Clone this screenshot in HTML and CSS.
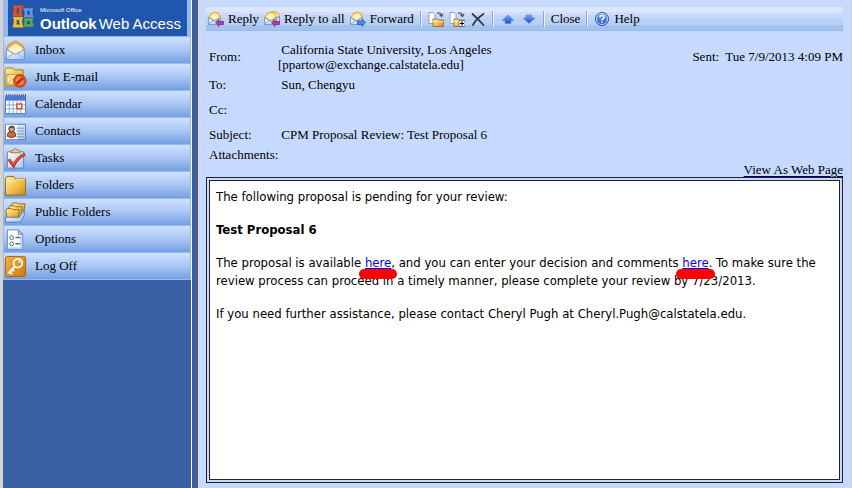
FILE: index.html
```html
<!DOCTYPE html>
<html lang="en">
<head>
<meta charset="utf-8">
<title>Outlook Web Access</title>
<link rel="stylesheet" href="styles.css">
</head>
<body>
<svg class="defs" aria-hidden="true">
  <defs>
    <linearGradient id="gold" x1="0" y1="0" x2="1" y2="1"><stop offset="0" stop-color="#fff0a8"/><stop offset=".5" stop-color="#f3c44e"/><stop offset="1" stop-color="#c88a1c"/></linearGradient>
    <linearGradient id="paper" x1="0" y1="0" x2="1" y2="1"><stop offset="0" stop-color="#fff"/><stop offset="1" stop-color="#a4c6f2"/></linearGradient>
    <linearGradient id="blue" x1="0" y1="0" x2="0" y2="1"><stop offset="0" stop-color="#6fa8ff"/><stop offset="1" stop-color="#1c50cc"/></linearGradient>
    <linearGradient id="orange" x1="0" y1="0" x2="1" y2="1"><stop offset="0" stop-color="#f7b23c"/><stop offset="1" stop-color="#cf7a08"/></linearGradient>
    <g id="mail">
      <path d="M1 6.500 3 2.500 7 1 11 2.500 12.500 6.500 6.500 9.500Z" fill="#ffdc5c" stroke="#d0a040" stroke-width=".8"/>
      <path d="M3 5 7 2.500 10 4V7L6.500 9 3 7Z" fill="#fff6c4"/>
      <path d="M.5 6.500 6.500 10 12.500 6.500V13.500H.5Z" fill="url(#paper)" stroke="#6b8cc0" stroke-width=".8"/>
      <path d="M.8 13.200 5 9.500M12.200 13.200 8 9.500" stroke="#7f9fd0" stroke-width=".8"/>
    </g>
    <g id="move">
      <path d="M1 1.500H5L7 3.500V12.500H1Z" fill="#fff" stroke="#8791a8" stroke-width=".8"/>
      <path d="M9 2.500Q12 .5 13.500 4.500M11.500 3.500 13.700 5.500 15 2.800" fill="none" stroke="#44597f" stroke-width="1.200"/>
      <path d="M5 8H9L10 9H15.500V15.500H5Z" fill="url(#gold)" stroke="#96651a" stroke-width=".8"/>
      <path d="M5 10.500H15.500" stroke="#fff0a0" stroke-width=".8"/>
    </g>
  </defs>
</svg>
<div class="app">
  <aside class="sidebar">
    <header class="logo">
      <svg class="logo-mark" viewBox="0 0 22 24" aria-hidden="true">
        <g fill="none" stroke-width="3">
          <path d="M9.500 3H3Q4 7 2.500 11H8.500Q7.500 7 9.500 3Z" stroke="#e2501e"/>
          <path d="M13 5.500H19.500Q18.500 9 20 12H13.500Q14.500 9 13 5.500Z" stroke="#6b94df" stroke-width="2.500"/>
          <path d="M3 14.500H9Q8 18 9.500 22H2.500Q4 18 3 14.500Z" stroke="#f3bd24"/>
          <path d="M13.500 15.500H19.500Q18.500 18 20 21.500H13Q14.500 18 13.500 15.500Z" stroke="#62ae3c" stroke-width="2.500"/>
        </g>
      </svg>
      <div class="logo-text">
        <span class="logo-brand">Microsoft Office</span>
        <span class="logo-name"><b>Outlook</b><span>Web Access</span></span>
      </div>
    </header>
    <nav class="nav">
      <a href="#inbox"><svg viewBox="0 0 24 24"><path d="M2.500 11 5 6 12 2 19 6 21.500 11 12 16Z" fill="#f7b348" stroke="#d28a2a"/><path d="M5 9.500 12 5 19 9.500V13L12 16 5 13Z" fill="#fff3c8"/><path d="M2.500 11 12 16 21.500 11V21.500H2.500Z" fill="url(#paper)" stroke="#6f93c6"/><path d="M3 21 9.500 15M21 21 14.500 15" stroke="#85a5d4"/></svg>Inbox</a>
      <a href="#junk"><svg viewBox="0 0 24 24"><path d="M1 4 2 2H9L11 4H20V19L18 21H1Z" fill="url(#gold)" stroke="#a87824"/><path d="M3 9H16V19H3Z" fill="#ffeeb4" stroke="#c7963a"/><path d="M3 9 9.500 15 16 9M3 19 8 14" fill="none" stroke="#d3a34b"/><circle cx="16.500" cy="15.500" r="6.500" fill="#e65a28" stroke="#a93210"/><circle cx="16.500" cy="15.500" r="4" fill="#f08c58"/><path d="M13 18.500 20 12.500" stroke="#c32d0c" stroke-width="3"/></svg>Junk E-mail</a>
      <a href="#calendar"><svg viewBox="0 0 24 24"><path d="M1.500 4H22.500V21.500H1.500Z" fill="#fff" stroke="#5577b5"/><path d="M1 3.500H23V8H1Z" fill="#4679d8"/><path d="M2 2.500H23" stroke="#202840" stroke-width="2" stroke-dasharray="1 1"/><path d="M2 12.500H22M2 16.500H22M5.500 8V21M9.500 8V21M13.500 8V21M17.500 8V21" stroke="#84a6de"/><path d="M13.500 11.500H18.500V16.500H13.500Z" fill="#fff" stroke="#e04c24" stroke-width="1.500"/></svg>Calendar</a>
      <a href="#contacts"><svg viewBox="0 0 24 24"><path d="M1.500 4.500H22.500V20.500H1.500Z" fill="url(#paper)" stroke="#587bae"/><path d="M2 5H14V20H2Z" fill="#fff"/><path d="M3.500 17Q3 12 8 12T12 17Q8 20 3.500 17Z" fill="#dd6825" stroke="#6c351b"/><circle cx="8" cy="9.500" r="3" fill="#c8a891" stroke="#36353b"/><path d="M5 9Q5 6 8 6T11 9Q8 7 5 9Z" fill="#4b4b55"/><path d="M13 8.500H21M13 11.500H21M13 14.500H21M13 17.500H21" stroke="#7193ca"/></svg>Contacts</a>
      <a href="#tasks"><svg viewBox="0 0 24 24"><path d="M3.500 5H20.500V22H3.500Z" fill="url(#paper)" stroke="#6482b0"/><path d="M7 6Q7 3 10 3Q12 0 14 3Q17 3 17 6Z" fill="#e5ce82" stroke="#957b38"/><path d="M5 13 10 19.500Q14 11 22 7.500" fill="none" stroke="#a91f16" stroke-width="3"/><path d="M5 13 10 18.500Q14 11 22 7.500" fill="none" stroke="#ee4630" stroke-width="2"/></svg>Tasks</a>
      <a href="#folders"><svg viewBox="0 0 24 24"><path d="M1.500 5 3 2.500H10L12 5H22.500V22H1.500Z" fill="url(#gold)" stroke="#94671e"/><path d="M2 7.500H11L13 5.500H22" fill="none" stroke="#fff0a8"/></svg>Folders</a>
      <a href="#public"><svg viewBox="0 0 24 24"><path d="M8 4 9 2H14L15 3H22L20 15H8Z" fill="url(#gold)" stroke="#946a20"/><path d="M5 7 6 5H11L12 6H19L18 17H5Z" fill="url(#gold)" stroke="#946a20"/><path d="M2 10 3 8H8L9 9H16L15 18H3Z" fill="url(#gold)" stroke="#946a20"/><path d="M1.500 17H16L21 9V15L17 22H1.500Z" fill="url(#paper)" stroke="#607eae"/></svg>Public Folders</a>
      <a href="#options"><svg viewBox="0 0 24 24"><path d="M3.500 2H15L19.500 6.500V22H3.500Z" fill="#fff" stroke="#6686bd"/><path d="M18 8V21H5" fill="none" stroke="#bed3ee" stroke-width="2"/><path d="M15 2V6.500H19.500Z" fill="#bcd0ec" stroke="#6686bd"/><circle cx="8" cy="10" r="2" fill="none" stroke="#4f617f"/><circle cx="8" cy="16.500" r="2" fill="none" stroke="#4f617f"/><path d="M12 10H17M12 16.500H17" stroke="#536b95" stroke-width="1.500"/></svg>Options</a>
      <a href="#logoff"><svg viewBox="0 0 24 24"><rect x="1.500" y="1.500" width="21" height="21" rx="2" fill="url(#orange)" stroke="#a7640a"/><circle cx="14.500" cy="8.500" r="4.500" fill="none" stroke="#fff" stroke-width="2"/><circle cx="16" cy="7" r="1" fill="#fff"/><path d="M11.500 12 4.500 19M6 17.500 8.500 20M8.500 15 10.500 17" stroke="#fff" stroke-width="2"/></svg>Log Off</a>
    </nav>
  </aside>
  <div class="divider"></div>
  <main class="message">
    <div class="toolbar" role="toolbar" aria-label="Message actions">
      <button type="button"><svg viewBox="0 0 16 16"><use href="#mail"/><path d="M7.500 11.500 11 8.500V10.500H15.500V13.500H11V15.500Z" fill="#b13ca8" stroke="#78216f" stroke-width=".7"/></svg>Reply</button>
      <button type="button"><svg viewBox="0 0 16 16"><g transform="translate(3 -1)"><use href="#mail"/></g><use href="#mail"/><path d="M7.500 11.500 11 8.500V10.500H15.500V13.500H11V15.500Z" fill="#b13ca8" stroke="#78216f" stroke-width=".7"/></svg>Reply to all</button>
      <button type="button"><svg viewBox="0 0 16 16"><use href="#mail"/><path d="M15.500 11.500 12 8V10H7.500V13.500H12V15.500Z" fill="#428cf2" stroke="#1f4fa9" stroke-width=".7"/></svg>Forward</button>
      <span class="separator"></span>
      <button type="button" aria-label="Move"><svg viewBox="0 0 16 16"><use href="#move"/></svg></button>
      <button type="button" aria-label="Copy"><svg viewBox="0 0 16 16"><use href="#move"/><rect x="10" y="9.500" width="6" height="6" rx="1" fill="#fff" stroke="#4b4b4b" stroke-width=".7"/><path d="M11 12.500H15M13 10.500V14.500" stroke="#000" stroke-width="1.200"/></svg></button>
      <button type="button" aria-label="Delete"><svg viewBox="0 0 16 16"><path d="M2.500 3Q8 8 13.500 14M13.500 3Q6 8 3 14" fill="none" stroke="#333942" stroke-width="1.800" stroke-linecap="round"/></svg></button>
      <span class="separator"></span>
      <button type="button" aria-label="Previous"><svg viewBox="0 0 16 16"><path d="M8 4 14 9.500H11V12.500H5V9.500H2Z" fill="url(#blue)" stroke="#5c8fe6" stroke-width=".7"/></svg></button>
      <button type="button" aria-label="Next"><svg viewBox="0 0 16 16"><path d="M8 12.500 14 7H11V4H5V7H2Z" fill="url(#blue)" stroke="#5c8fe6" stroke-width=".7"/></svg></button>
      <span class="separator"></span>
      <button type="button">Close</button>
      <span class="separator"></span>
      <button type="button"><svg viewBox="0 0 16 16"><circle cx="8" cy="8" r="6.500" fill="url(#blue)" stroke="#285bb4"/><circle cx="8" cy="8" r="5.500" fill="none" stroke="#c9defc"/><path d="M6 6.500Q6 4.500 8 4.500T10 6.500Q10 7.500 8 8.500V9.500M8 10.500V12" fill="none" stroke="#fff" stroke-width="1.500"/></svg>Help</button>
    </div>
    <div class="headers">
      <dl class="fields">
        <dt>From:</dt><dd class="sender">&nbsp;California State University, Los Angeles<br>[ppartow@exchange.calstatela.edu]</dd>
        <dt>To:</dt><dd>&nbsp;Sun, Chengyu</dd>
        <dt>Cc:</dt><dd></dd>
        <dt>Subject:</dt><dd>&nbsp;CPM Proposal Review: Test Proposal 6</dd>
      </dl>
      <div class="sent">Sent:&nbsp; Tue 7/9/2013 4:09 PM</div>
    </div>
    <div class="attachments">Attachments:</div>
    <a class="web-view" href="#web">View As Web Page</a>
    <div class="frame">
      <article class="mail">
        <p>The following proposal is pending for your review:</p>
        <p><b>Test Proposal 6</b></p>
        <p>The proposal is available <a class="marked" href="#proposal">here</a>, and you can enter your decision and comments <a class="marked" href="#decision">here</a>. To make sure the review process can proceed in a timely manner, please complete your review by 7/23/2013.</p>
        <p>If you need further assistance, please contact Cheryl Pugh at Cheryl.Pugh@calstatela.edu.</p>
      </article>
    </div>
  </main>
</div>
</body>
</html>
```
FILE: styles.css
```css
* { box-sizing: border-box; }

body {
  margin: 0;
  font: 13px/16px "Liberation Serif", "Times New Roman", serif;
  color: #000;
  background: #c6daff;
}

.defs { position: absolute; width: 0; height: 0; }

.app { display: flex; min-height: 100vh; }

.sidebar {
  flex: 0 0 191px;
  border-left: 3px solid #d6d3ce;
  background: #3a5fa5;
}

.logo {
  display: flex;
  height: 37px;
  padding: 4px 0 4px 4px;
  gap: 6px;
  color: #fff;
  background: #2156ad;
  border: solid #8fbaf7;
  border-width: 0 4px 1px 5px;
  font-family: "Liberation Sans", Arial, sans-serif;
}

.logo-mark { flex: none; width: 22px; height: 24px; }
.logo-text { display: flex; flex-direction: column; padding-top: 2px; white-space: nowrap; }
.logo-brand { font-size: 6px; line-height: 8px; }
.logo-name { display: flex; gap: 2px; font-size: 15px; line-height: 20px; }

.nav a {
  display: flex;
  align-items: center;
  gap: 8px;
  height: 27px;
  color: #000;
  text-decoration: none;
  border: solid #8fbcf8;
  border-width: 0 1px 1px;
  background: linear-gradient(#cfe1ff, #a9c6f3 50%, #769fe2);
}

.nav svg { width: 23px; height: 23px; fill: none; }

.divider {
  flex: 0 0 4px;
  margin-right: 0;
  border-left: 1px solid #fff;
  border-right: 2px solid #5a5c66;
  background: #3a5fa5;
  flex-basis: 7px;
}

.message {
  flex: 1;
  min-width: 0;
  display: flex;
  flex-direction: column;
  padding: 7px 8px 5px;
  border-right: 1px solid #d6d3ce;
}

.toolbar {
  display: flex;
  align-items: center;
  height: 24px;
  padding-left: 2px;
  gap: 5px;
  background: linear-gradient(#dde6ff 5px, #cfdefc 5px 8px, #c4d6f7 8px 12px, #b9d0f6 12px 18px, #a3c3ee 18px 23px, #94bcf0 23px);
}

.toolbar button {
  display: flex;
  align-items: center;
  gap: 4px;
  padding: 0;
  border: 0;
  background: none;
  color: inherit;
  font: inherit;
  white-space: nowrap;
}

.toolbar svg { width: 16px; height: 16px; }

.separator {
  width: 2px;
  height: 16px;
  margin: 0 1px;
  border-left: 1px solid #8ea6cc;
  border-right: 1px solid #eef4ff;
}

.headers {
  display: flex;
  justify-content: space-between;
  padding: 11px 0 0 3px;
}

.fields {
  display: grid;
  grid-template-columns: 69px auto;
  grid-template-rows: 30px;
  grid-auto-rows: 25px;
  align-items: center;
  margin: 0;
}

.fields dd { margin: 0; }
.sender { line-height: 15px; }
.sent { line-height: 30px; white-space: nowrap; }
.attachments { padding-left: 3px; }

.web-view {
  align-self: flex-end;
  line-height: 14px;
  color: #000;
  text-decoration: underline 1px #00007a;
  text-underline-offset: 2px;
}

.frame {
  flex: 1;
  display: flex;
  padding: 2px;
  border: 1px solid #222;
}

.mail {
  flex: 1;
  padding: 7px 6px;
  border: 1px solid #222;
  background: #fff;
  font: 13px/18px "DejaVu Sans Condensed", Tahoma, sans-serif;
}

.mail p { margin: 0 0 15px; }
.mail a { color: #00f; }

.marked { position: relative; }

.marked::after {
  content: "";
  position: absolute;
  left: -6px;
  right: -6px;
  bottom: -9px;
  height: 10px;
  border-radius: 5px;
  background: #f00;
}
```
